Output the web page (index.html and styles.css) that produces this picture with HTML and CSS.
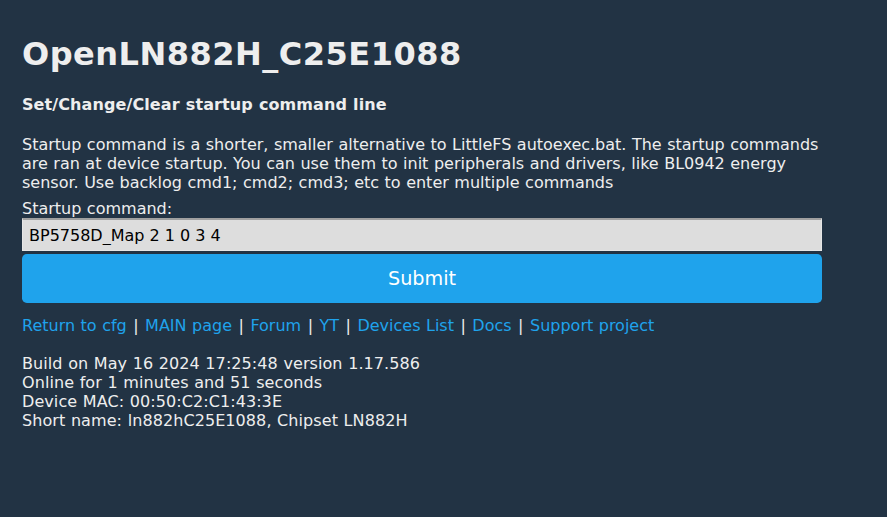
FILE: index.html
```html
<!DOCTYPE html>
<html lang="en">
<head>
  <meta charset="UTF-8" />
  <meta name="viewport" content="width=device-width, initial-scale=1.0" />
  <title>OpenLN882H_C25E1088</title>
  <link rel="stylesheet" href="styles.css">
</head>
<body>
  <div class="main">
    <h1>OpenLN882H_C25E1088</h1>
    <h3>Set/Change/Clear startup command line</h3>
    <p class="intro">Startup command is a shorter, smaller alternative to LittleFS autoexec.bat. The startup commands are ran at device startup. You can use them to init peripherals and drivers, like BL0942 energy sensor. Use backlog cmd1; cmd2; cmd3; etc to enter multiple commands</p>

    <form class="cmd-form" action="/startup_command">
      <label for="startup_cmd">Startup command:</label>
      <input type="text" id="startup_cmd" name="data" value="BP5758D_Map 2 1 0 3 4">
      <input type="submit" value="Submit">
    </form>

    <div class="nav">
      <a href="cfg">Return to cfg</a> <span class="sep">|</span> <a href="index">MAIN page</a> <span class="sep">|</span> <a href="#">Forum</a> <span class="sep">|</span> <a href="#">YT</a> <span class="sep">|</span> <a href="#">Devices List</a> <span class="sep">|</span> <a href="#">Docs</a> <span class="sep">|</span> <a href="#">Support project</a>
    </div>

    <div class="info">
      Build on May 16 2024 17:25:48 version 1.17.586<br>
      Online for 1 minutes and 51 seconds<br>
      Device MAC: 00:50:C2:C1:43:3E<br>
      Short name: ln882hC25E1088, Chipset LN882H
    </div>
  </div>
</body>
</html>
```

FILE: styles.css
```css
body {
  margin: 0;
  background: #223344;
  color: #eeeeee;
  font-family: Verdana, "DejaVu Sans", sans-serif;
  font-size: 16px;
  line-height: 19px;
  word-spacing: 0.4px;
}
.main {
  width: 800px;
  padding: 20px 22px;
}
h1 {
  font-size: 32px;
  line-height: 39px;
  letter-spacing: 0.5px;
  margin: 15px 0 21px;
}
h3 {
  font-size: 16px;
  letter-spacing: 0.1px;
  margin: 0 0 21px;
}
.intro { margin: 0 0 7px; }
.cmd-form { margin: 0; }
.cmd-form label { display: block; }
input {
  display: block;
  width: 100%;
  box-sizing: border-box;
  font-family: Verdana, "DejaVu Sans", sans-serif;
  font-size: 16px;
}
input[type="text"] {
  height: 33px;
  padding: 0 6px;
  background: #dddddd;
  color: #000;
  border: 1px solid #e6e6e6;
  border-top: 2px solid #a0a0a0;
}
input[type="submit"] {
  height: 49px;
  margin-top: 3px;
  padding: 0;
  border: 0;
  border-radius: 0.3rem;
  background: #1fa3ec;
  color: #fff;
  font-size: 1.2rem;
  cursor: pointer;
}
.nav { margin-top: 13px; }
.nav .sep { padding: 0 1px; }
a { color: #1fa3ec; text-decoration: none; }
.info {
  margin-top: 19px;
  letter-spacing: 0.08px;
}
```
